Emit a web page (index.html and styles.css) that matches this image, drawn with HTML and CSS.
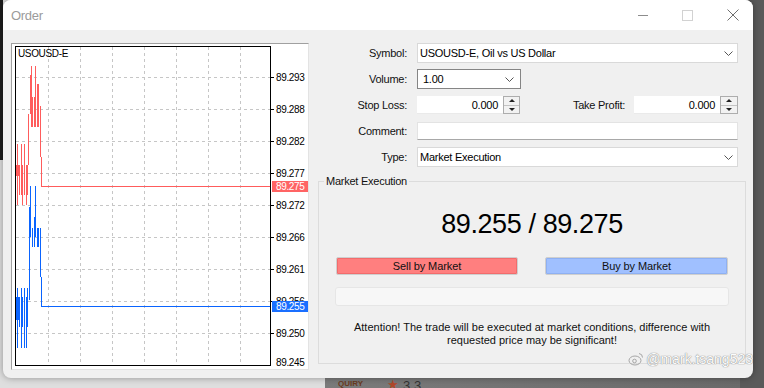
FILE: index.html
```html
<!DOCTYPE html>
<html lang="en">
<head>
  <meta charset="UTF-8" />
  <title>Order</title>
  <link rel="stylesheet" href="styles.css">
</head>
<body>
<div class="screen">
  <div class="window">
    <div class="titlebar">
      <span class="title">Order</span>
      <div class="controls">
        <span class="ctl"><svg width="10" height="10" viewBox="0 0 10 10"><path d="M0 5.5H10" stroke="#8c8c8c" stroke-width="1"/></svg></span>
        <span class="ctl"><svg width="11" height="11" viewBox="0 0 11 11"><rect x="0.5" y="0.5" width="10" height="10" fill="none" stroke="#d2d2d2"/></svg></span>
        <span class="ctl"><svg width="12" height="12" viewBox="0 0 12 12"><path d="M0.5 0.5L11.5 11.5M11.5 0.5L0.5 11.5" stroke="#6e6e6e" stroke-width="1"/></svg></span>
      </div>
    </div>

    <div class="client">
      <div class="chart">
        <svg width="296" height="325" viewBox="12 44 296 325">
          <g stroke="#c6c6c6" stroke-dasharray="3 3" shape-rendering="crispEdges">
            <path d="M48.5 47V365M80.5 47V365M112.5 47V365M144.5 47V365M176.5 47V365M208.5 47V365M240.5 47V365"/>
            <path d="M16 77.5H270M16 109.5H270M16 141.5H270M16 173.5H270M16 205.5H270M16 237.5H270M16 269.5H270M16 301.5H270M16 333.5H270"/>
          </g>
          <rect x="15.5" y="46.5" width="255" height="319" fill="none" stroke="#000" shape-rendering="crispEdges"/>
          <path d="M270 77.5H274M270 109.5H274M270 141.5H274M270 173.5H274M270 205.5H274M270 237.5H274M270 269.5H274M270 301.5H274M270 333.5H274" stroke="#000" shape-rendering="crispEdges"/>

          <g stroke="#ff5c5c" shape-rendering="crispEdges" fill="none">
            <path d="M17.5 144V205M19.5 165V195M21.5 144V195M22.5 165V205M24.5 144V195M26.5 165V205M27.5 165V195M28.5 114V165M30.5 75V114M31.5 66V127M32.5 97V127M34.5 97V127M35.5 66V127M37.5 84V127M38.5 84V127M40.5 106V157"/>
            <path d="M41.5 157V186.5H270"/>
          </g>
          <rect x="16" y="165" width="3" height="11" fill="#ff5c5c"/>

          <g stroke="#0a64ff" shape-rendering="crispEdges" fill="none">
            <path d="M17.5 288V348M19.5 297V327M21.5 288V348M22.5 297V327M24.5 288V348M26.5 297V348M27.5 288V327M29.5 207V300M30.5 186V237M32.5 228V247M34.5 217V247M35.5 186V237M37.5 228V247M38.5 228V247M40.5 228V277"/>
            <path d="M41.5 277V306.5H270"/>
          </g>
          <rect x="16" y="297" width="3" height="23" fill="#0a64ff"/>

          <g class="axis">
            <text x="18" y="57">USOUSD-E</text>
            <text x="276" y="81">89.293</text>
            <text x="276" y="113">89.288</text>
            <text x="276" y="145">89.282</text>
            <text x="276" y="177">89.277</text>
            <text x="276" y="209">89.272</text>
            <text x="276" y="241">89.266</text>
            <text x="276" y="273">89.261</text>
            <text x="276" y="305">89.256</text>
            <text x="276" y="337">89.250</text>
            <text x="276" y="366">89.245</text>
          </g>
          <rect x="272" y="181" width="36" height="11" fill="#ff6464"/>
          <text class="tag" x="276" y="190">89.275</text>
          <rect x="272" y="301" width="36" height="11" fill="#1a6fff"/>
          <text class="tag" x="276" y="310">89.255</text>
        </svg>
      </div>

      <div class="form">
        <div class="row">
          <span class="lbl">Symbol:</span>
          <div class="select full">
            <span>USOUSD-E, Oil vs US Dollar</span>
            <svg class="chev" width="9" height="5" viewBox="0 0 9 5"><path d="M0.5 0.5L4.5 4.5L8.5 0.5" fill="none" stroke="#555"/></svg>
          </div>
        </div>
        <div class="row">
          <span class="lbl">Volume:</span>
          <div class="select volume">
            <span>1.00</span>
            <svg class="chev" width="9" height="5" viewBox="0 0 9 5"><path d="M0.5 0.5L4.5 4.5L8.5 0.5" fill="none" stroke="#555"/></svg>
          </div>
        </div>
        <div class="row">
          <span class="lbl">Stop Loss:</span>
          <div class="spin">
            <span class="num">0.000</span>
            <span class="arrows"><i class="up"></i><i class="down"></i></span>
          </div>
          <span class="lbl tp">Take Profit:</span>
          <div class="spin wide">
            <span class="num">0.000</span>
            <span class="arrows"><i class="up"></i><i class="down"></i></span>
          </div>
        </div>
        <div class="row">
          <span class="lbl">Comment:</span>
          <div class="text-field"></div>
        </div>
        <div class="row">
          <span class="lbl">Type:</span>
          <div class="select full">
            <span>Market Execution</span>
            <svg class="chev" width="9" height="5" viewBox="0 0 9 5"><path d="M0.5 0.5L4.5 4.5L8.5 0.5" fill="none" stroke="#555"/></svg>
          </div>
        </div>

        <fieldset class="group">
          <legend>Market Execution</legend>
          <div class="quote">89.255 / 89.275</div>
          <div class="actions">
            <button class="btn sell">Sell by Market</button>
            <button class="btn buy">Buy by Market</button>
          </div>
          <div class="progress"></div>
          <p class="note">Attention! The trade will be executed at market conditions, difference with<br>requested price may be significant!</p>
        </fieldset>
      </div>
    </div>

    <div class="watermark">
      <svg width="16" height="14" viewBox="0 0 16 14"><ellipse cx="7" cy="8.5" rx="6" ry="4.5" fill="none" stroke="#9a9a9a"/><circle cx="6.5" cy="9" r="1.8" fill="none" stroke="#9a9a9a"/><path d="M11 1.5a4 4 0 0 1 3.5 4" fill="none" stroke="#9a9a9a"/></svg>
      <span>@mark.tsang523</span>
    </div>
  </div>

  <div class="below">
    <span class="brand">QUIRY</span>
    <span class="star">★</span>
    <span class="rate">3.3</span>
  </div>
</div>
</body>
</html>
```

FILE: styles.css
```css
body {
  margin: 0;
  font-family: 'Liberation Sans', Arial, sans-serif;
  color: #000;
}
.screen {
  width: 764px;
  height: 388px;
  overflow: hidden;
  background:
    linear-gradient(#1e1e1e, #1e1e1e) 0 0 / 3px 160px no-repeat,
    linear-gradient(to right, #dedede 0, #dedede 325px, #7b7b7b 325px, #6a6a6a 740px, #5a5a5a 740px);
}
.window {
  position: relative;
  margin-left: 3px;
  width: 750px;
  height: 378px;
  background: #f0f0f0;
  border-radius: 8px;
  overflow: hidden;
  box-shadow: 0 0 7px rgba(0, 0, 0, 0.35);
}
.titlebar {
  height: 30px;
  background: #fff;
  display: flex;
  align-items: center;
  padding-left: 8px;
}
.title {
  font-size: 13px;
  letter-spacing: -0.3px;
  color: #9b9b9b;
}
.controls {
  margin-left: auto;
  margin-right: -2px;
  display: flex;
  height: 30px;
}
.ctl {
  width: 45px;
  display: flex;
  align-items: center;
  justify-content: center;
}
.client {
  display: flex;
  gap: 9px;
  padding: 13px 7px 0 8px;
}
.chart {
  width: 296px;
  height: 325px;
  background: #fff;
  border: 1px solid;
  border-color: #a0a0a0 #e3e3e3 #e3e3e3 #a0a0a0;
}
.chart svg {
  display: block;
}
.axis text, .tag {
  font-family: 'Liberation Sans', Arial, sans-serif;
  font-size: 10px;
  letter-spacing: -0.35px;
  fill: #000;
}
.tag {
  fill: #fff;
}
.form {
  width: 428px;
  font-size: 11px;
  letter-spacing: -0.25px;
}
.row {
  display: flex;
  align-items: center;
  height: 20px;
  margin-bottom: 6px;
}
.lbl {
  width: 89px;
  margin-right: 10px;
  text-align: right;
  color: #111;
}
.lbl.tp {
  width: 105px;
  margin-right: 9px;
}
.select {
  box-sizing: border-box;
  height: 20px;
  background: #fff;
  border: 1px solid #d9d9d9;
  display: flex;
  align-items: center;
  justify-content: space-between;
  padding: 0 4px 0 2px;
}
.select.full {
  width: 321px;
}
.select.volume {
  width: 104px;
  border-color: #858585;
  padding-left: 5px;
  padding-right: 6px;
}
.spin {
  display: flex;
  width: 103px;
  height: 18px;
}
.spin.wide {
  width: 104px;
}
.num {
  flex: 1;
  background: #fff;
  text-align: right;
  padding-right: 5px;
  line-height: 18px;
  border-bottom: 1px solid #eaeaea;
  box-sizing: border-box;
}
.arrows {
  box-sizing: border-box;
  width: 17px;
  border: 1px solid #adadad;
  background: #f2f2f2;
  display: flex;
  flex-direction: column;
}
.spin.wide .arrows {
  width: 18px;
}
.arrows i {
  flex: 1;
  display: flex;
  align-items: center;
  justify-content: center;
}
.arrows i.down {
  border-top: 1px solid #c4c4c4;
}
.arrows i::before {
  content: "";
  border-left: 3px solid transparent;
  border-right: 3px solid transparent;
}
.arrows i.up::before {
  border-bottom: 3px solid #222;
}
.arrows i.down::before {
  border-top: 3px solid #222;
}
.text-field {
  box-sizing: border-box;
  width: 321px;
  height: 18px;
  background: #fff;
  border: 1px solid #e3e3e3;
  border-bottom-color: #a8a8a8;
}
.group {
  margin: 5px 0 0;
  padding: 0 17px 0 5px;
  border: 1px solid #dcdcdc;
  height: 191px;
  box-sizing: border-box;
}
.group legend {
  padding: 0 2px;
  line-height: 16px;
  color: #111;
}
.quote {
  margin: 19px 0 0 12px;
  text-align: center;
  font-size: 27px;
  letter-spacing: -0.4px;
  line-height: 32px;
}
.actions {
  display: flex;
  justify-content: space-between;
  margin: 17px 0 0 12px;
}
.btn {
  box-sizing: border-box;
  height: 18px;
  width: 182px;
  padding: 0;
  font-family: inherit;
  font-size: 11px;
  letter-spacing: -0.1px;
  color: #111;
  border: 1px solid #cfcfcf;
  border-radius: 2px;
}
.btn.sell {
  background: #ff7f7f;
  box-shadow: inset 0 0 0 1px #f26c6c;
}
.btn.buy {
  width: 183px;
  background: #a0c0ff;
  box-shadow: inset 0 0 0 1px #8eb0f2;
}
.progress {
  box-sizing: border-box;
  height: 19px;
  margin: 12px -1px 0 11px;
  background: #f7f7f7;
  border: 1px solid #e6e6e6;
  border-radius: 3px;
}
.note {
  margin: 15px 0 0 12px;
  text-align: center;
  line-height: 13px;
  letter-spacing: 0;
  color: #111;
}
.watermark {
  position: absolute;
  right: 0;
  top: 351px;
  display: flex;
  align-items: center;
  gap: 2px;
  font-size: 14px;
  color: #fff;
  opacity: 0.85;
  text-shadow: 0 0 1px #777, 0 0 1px #777;
}
.below {
  height: 10px;
  display: flex;
  align-items: flex-start;
  padding-left: 338px;
  overflow: hidden;
}
.brand {
  font-size: 8px;
  font-weight: bold;
  color: #6b3a1f;
  margin-top: 1px;
}
.star {
  margin-left: 24px;
  color: #b0482a;
  font-size: 13px;
  line-height: 14px;
}
.rate {
  margin-left: 4px;
  font-size: 13px;
  line-height: 14px;
  color: #333;
  margin-top: 1px;
}
```
